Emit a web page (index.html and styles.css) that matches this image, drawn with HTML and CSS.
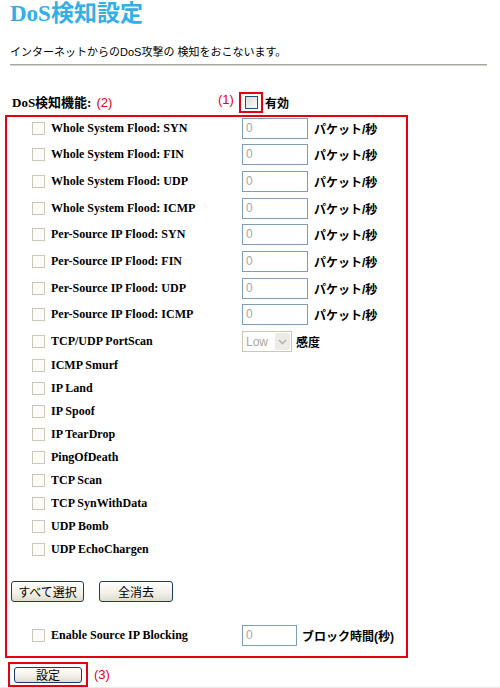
FILE: index.html
```html
<!DOCTYPE html>
<html lang="ja">
<head>
    <meta charset="UTF-8">
    <meta name="viewport" content="width=device-width, initial-scale=1.0">
    <title>DoS検知設定</title>
    <link rel="stylesheet" href="styles.css">
</head>
<body>
    <h1 class="title">DoS検知設定</h1>
    <p class="desc">インターネットからのDoS攻撃の 検知をおこないます。</p>
    <hr class="rule">

    <div class="func">
        <div class="func-label"><b class="lbl">DoS検知機能:</b><span class="mark mark-2">(2)</span></div>
        <span class="mark mark-1">(1)</span>
        <span class="hl-box"><span class="cb cb-on"></span></span>
        <b class="unit">有効</b>
    </div>

    <div class="area">
        <div class="row wide"><span class="cb"></span><b class="name">Whole System Flood: SYN</b><span class="num">0</span><b class="unit">パケット/秒</b></div>
        <div class="row wide"><span class="cb"></span><b class="name">Whole System Flood: FIN</b><span class="num">0</span><b class="unit">パケット/秒</b></div>
        <div class="row wide"><span class="cb"></span><b class="name">Whole System Flood: UDP</b><span class="num">0</span><b class="unit">パケット/秒</b></div>
        <div class="row wide"><span class="cb"></span><b class="name">Whole System Flood: ICMP</b><span class="num">0</span><b class="unit">パケット/秒</b></div>
        <div class="row wide"><span class="cb"></span><b class="name">Per-Source IP Flood: SYN</b><span class="num">0</span><b class="unit">パケット/秒</b></div>
        <div class="row wide"><span class="cb"></span><b class="name">Per-Source IP Flood: FIN</b><span class="num">0</span><b class="unit">パケット/秒</b></div>
        <div class="row wide"><span class="cb"></span><b class="name">Per-Source IP Flood: UDP</b><span class="num">0</span><b class="unit">パケット/秒</b></div>
        <div class="row wide"><span class="cb"></span><b class="name">Per-Source IP Flood: ICMP</b><span class="num">0</span><b class="unit">パケット/秒</b></div>
        <div class="row wide">
            <span class="cb"></span><b class="name">TCP/UDP PortScan</b>
            <span class="sel">Low<span class="sel-btn"><svg width="9" height="6" viewBox="0 0 9 6"><path d="M1 1 L4.5 4.5 L8 1" fill="none" stroke="#b9b7ab" stroke-width="1.6"/></svg></span></span>
            <b class="unit">感度</b>
        </div>
        <div class="row"><span class="cb"></span><b class="name">ICMP Smurf</b></div>
        <div class="row"><span class="cb"></span><b class="name">IP Land</b></div>
        <div class="row"><span class="cb"></span><b class="name">IP Spoof</b></div>
        <div class="row"><span class="cb"></span><b class="name">IP TearDrop</b></div>
        <div class="row"><span class="cb"></span><b class="name">PingOfDeath</b></div>
        <div class="row"><span class="cb"></span><b class="name">TCP Scan</b></div>
        <div class="row"><span class="cb"></span><b class="name">TCP SynWithData</b></div>
        <div class="row"><span class="cb"></span><b class="name">UDP Bomb</b></div>
        <div class="row"><span class="cb"></span><b class="name">UDP EchoChargen</b></div>

        <div class="btns">
            <button class="btn">すべて選択</button>
            <button class="btn">全消去</button>
        </div>

        <div class="row block">
            <span class="cb"></span><b class="name">Enable Source IP Blocking</b>
            <span class="num num-short">0</span><b class="unit">ブロック時間(秒)</b>
        </div>
    </div>

    <div class="apply">
        <span class="hl-btn"><button class="btn btn-apply">設定</button></span>
        <span class="mark mark-3">(3)</span>
    </div>
    <div class="footer"></div>
</body>
</html>
```

FILE: styles.css
```css
body {
    margin: 0;
    font-family: "Liberation Sans", "Noto Sans CJK JP", sans-serif;
    font-size: 11px;
    color: #000;
    background: #fff;
}
.title {
    margin: 0;
    padding: 1px 0 0 10px;
    font: bold 23px/25px "Liberation Serif", "Noto Sans CJK JP", serif;
    color: #33aee6;
}
.desc {
    margin: 19px 0 0 10px;
    line-height: 14px;
}
.rule {
    margin: 5px 0 0 10px;
    width: 477px;
    height: 0;
    border: 0;
    border-top: 1px solid #a8a79f;
    border-bottom: 1px solid #d4d3cc;
}
.name {
    font: bold 12px/17px "Liberation Serif", "Noto Sans CJK JP", serif;
}
.lbl {
    font: bold 13px/17px "Liberation Serif", "Noto Sans CJK JP", serif;
}
.unit {
    font-weight: bold;
    font-size: 12px;
    white-space: nowrap;
}
.mark {
    color: #e50012;
    font-size: 13px;
    line-height: 16px;
}

/* function switch */
.func {
    display: flex;
    align-items: center;
    height: 21px;
    margin: 26px 0 2px 12px;
}
.func-label {
    width: 206px;
    display: flex;
    align-items: center;
}
.mark-2 {
    margin-left: 5px;
    padding-top: 1px;
}
.mark-1 {
    width: 21px;
    align-self: flex-start;
}
.hl-box {
    box-sizing: border-box;
    width: 24px;
    height: 21px;
    border: 2px solid #e50012;
    display: flex;
    align-items: center;
    justify-content: center;
    margin-right: 2px;
}

/* checkboxes */
.cb {
    box-sizing: border-box;
    flex: none;
    width: 13px;
    height: 13px;
    border: 1px solid #cbc8bb;
    background: #fbfbf8;
}
.cb-on {
    border-color: #1c5180;
    background: linear-gradient(135deg, #dcdcd5, #fbfbf9);
}

/* list box */
.area {
    box-sizing: border-box;
    width: 403px;
    height: 543px;
    margin-left: 5px;
    border: 2px solid #e50012;
}
.row {
    box-sizing: border-box;
    display: flex;
    align-items: center;
    height: 23px;
    padding: 0 0 6px 25px;
}
.row.wide {
    height: 26.7px;
    padding-bottom: 4.7px;
}
.name {
    width: 191px;
    margin-left: 6px;
    white-space: nowrap;
}
.num {
    box-sizing: border-box;
    width: 66px;
    height: 21px;
    border: 1px solid #7f9db9;
    padding: 2px 3px;
    color: #aca899;
    font-size: 12px;
    line-height: 15px;
    margin-right: 6px;
}
.num-short {
    width: 55px;
    margin-right: 5px;
}
.sel {
    box-sizing: border-box;
    display: flex;
    align-items: center;
    justify-content: space-between;
    width: 50px;
    height: 21px;
    border: 1px solid #cac8bb;
    padding: 1px 1px 1px 3px;
    color: #aca899;
    font-size: 12px;
    margin-right: 4px;
}
.sel-btn {
    width: 15px;
    height: 17px;
    background: #ecebe5;
    border-radius: 2px;
    display: flex;
    align-items: center;
    justify-content: center;
}

/* buttons */
.btns {
    display: flex;
    gap: 15px;
    margin: 16.7px 0 0 4px;
}
.btn {
    box-sizing: border-box;
    height: 21px;
    width: 73px;
    padding: 0;
    border: 1px solid #1d3c6c;
    border-radius: 3px;
    background: linear-gradient(#ffffff, #f1efe6 60%, #dedbcd);
    font-family: "Noto Sans CJK JP", sans-serif;
    font-size: 12px;
    line-height: 17px;
    color: #000;
}
.btns .btn + .btn {
    width: 74px;
}
.row.block {
    height: 21px;
    padding-bottom: 0;
    margin-top: 23px;
}

/* apply */
.apply {
    display: flex;
    align-items: center;
    margin: 4px 0 0 8px;
}
.hl-btn {
    box-sizing: border-box;
    width: 80px;
    height: 25px;
    border: 2px solid #e50012;
    padding: 3px 0 0 4px;
}
.btn-apply {
    width: 68px;
    height: 16px;
    line-height: 12px;
    display: block;
}
.mark-3 {
    margin-left: 6px;
}
.footer {
    height: 12px;
    background: #eceae2;
}
```
